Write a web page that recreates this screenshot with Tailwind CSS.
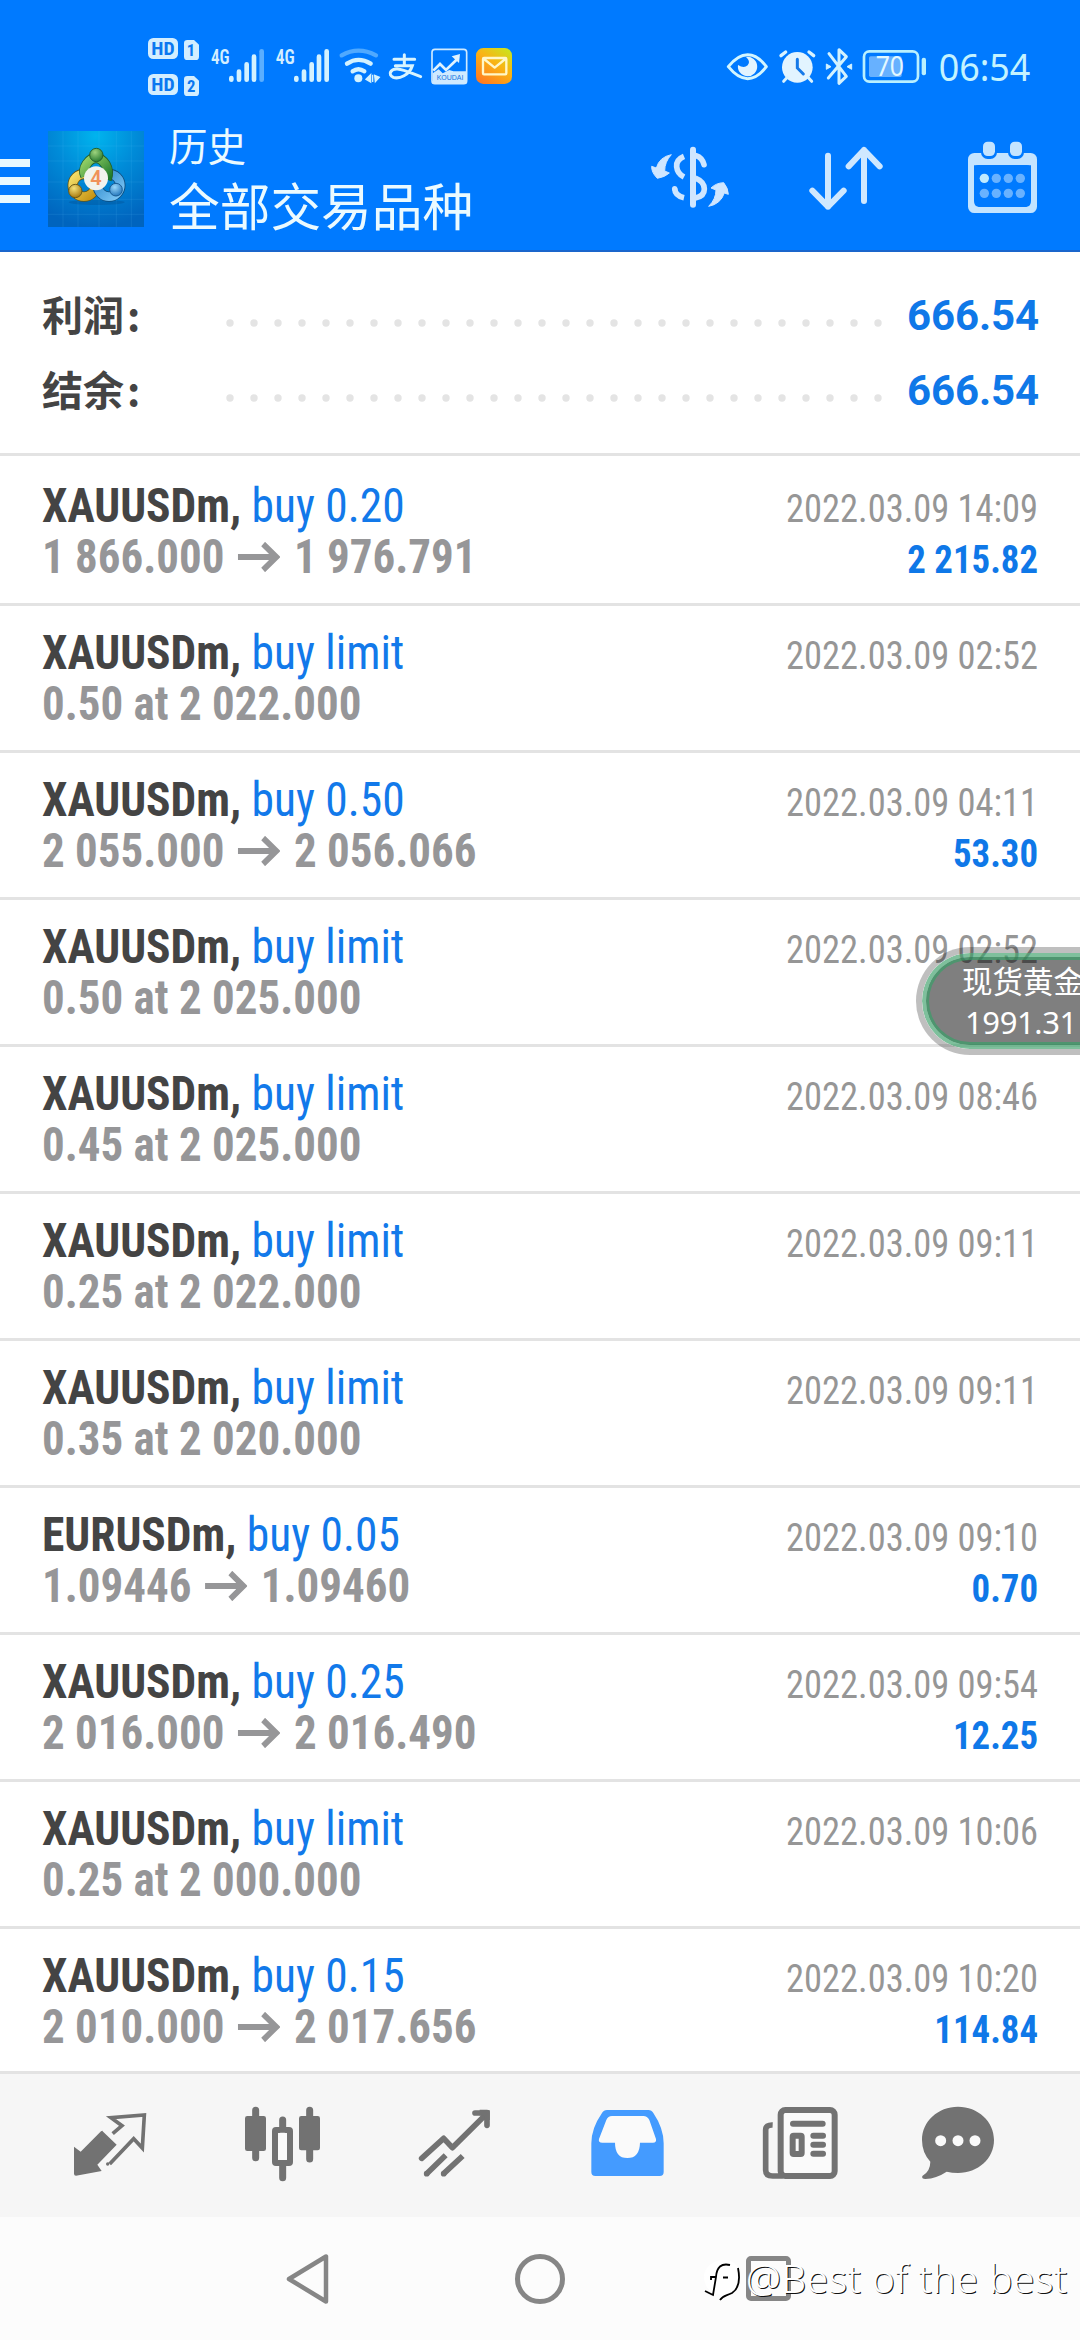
<!DOCTYPE html>
<html lang="zh">
<head>
<meta charset="utf-8">
<title>历史</title>
<script src="https://cdn.jsdelivr.net/npm/@tailwindcss/browser@4"></script>
</head>
<body class="relative flex h-[2340px] w-[1080px] flex-col overflow-hidden bg-white font-['Roboto_Condensed',sans-serif]">

<header class="flex h-[252px] flex-col border-b-2 border-[#1a66cc] bg-[#007aff]">
  <!-- status bar -->
  <div class="flex h-[108px] items-start pl-[130px] pt-5">
    <svg class="h-[90px] w-[400px]" viewBox="0 0 1200 270">
      <g fill="#d3eeff">
        <rect x="54" y="54" width="90" height="63" rx="16"/>
        <rect x="54" y="162" width="90" height="63" rx="16"/>
        <path d="M172 60h20l15 14v36q0 10-10 10h-25q-10 0-10-10v-40q0-10 10-10z"/>
        <path d="M172 168h20l15 14v36q0 10-10 10h-25q-10 0-10-10v-40q0-10 10-10z"/>
      </g>
      <g fill="#0b78f0" font-family="Roboto Condensed" font-weight="700" text-anchor="middle">
        <text x="99" y="105" font-size="56" textLength="70" lengthAdjust="spacingAndGlyphs">HD</text>
        <text x="99" y="213" font-size="56" textLength="70" lengthAdjust="spacingAndGlyphs">HD</text>
        <text x="183" y="108" font-size="50">1</text>
        <text x="184" y="216" font-size="50">2</text>
      </g>
      <g fill="#d3eeff" font-family="Roboto Condensed" font-weight="600" font-size="60">
        <text x="243" y="132" textLength="56" lengthAdjust="spacingAndGlyphs">4G</text>
        <text x="437" y="132" textLength="57" lengthAdjust="spacingAndGlyphs">4G</text>
      </g>
      <g stroke="#d3f2ff" stroke-width="14" stroke-linecap="round">
        <path d="M304 174v5M327 155v24M350 133v46M372 110v69"/>
        <path d="M395 94v85" stroke="#5aaeff"/>
        <path d="M499 174v5M522 155v24M545 133v46M567 110v69M590 94v85"/>
      </g>
      <g fill="none" stroke="#d3f2ff" stroke-width="13" stroke-linecap="round">
        <path d="M635 106Q685 78 738 106" stroke="#4fa9ff"/>
        <path d="M651 131Q685 108 722 131M668 154Q685 141 703 154"/>
      </g>
      <circle cx="685" cy="175" r="12" fill="#d3f2ff"/>
      <path d="M708 178l14-14v22zM728 164v22M734 166l14 6-12 13z" fill="#d3f2ff" stroke="#d3f2ff" stroke-width="4"/>
      <g fill="none" stroke="#d8f4ff" stroke-width="9" stroke-linecap="round">
        <path d="M792 118h62M823 104v32M796 137h51C838 165 808 178 790 172C772 164 782 146 802 147C826 149 850 163 872 170"/>
      </g>
      <rect x="906" y="88" width="104" height="103" rx="9" fill="none" stroke="#cfeaff" stroke-width="5"/>
      <path d="M908 160l18-12 12 12 20-10 12 4h40v36h-102z" fill="#cfeaff"/>
      <path d="M910 152l20-20 18 18 34-33" fill="none" stroke="#dff2ff" stroke-width="8"/>
      <path d="M990 102l-3 27-22-20z" fill="#dff2ff"/>
      <text x="920" y="180" font-family="Liberation Sans" font-size="21" textLength="80" fill="#1675e0">KOUDAI</text>
      <defs><linearGradient id="mail" x1="0.9" y1="0" x2="0.2" y2="1"><stop offset="0" stop-color="#c8e61e"/><stop offset=".45" stop-color="#f9b414"/><stop offset="1" stop-color="#ff7a22"/></linearGradient></defs>
      <rect x="1038" y="84" width="108" height="108" rx="22" fill="url(#mail)"/>
      <path d="M1062 114h64q3 0 3 3v43q0 3-3 3h-64q-3 0-3-3v-43q0-3 3-3zM1062 117l32 26 32-26" fill="none" stroke="#fff7c8" stroke-width="7" stroke-linejoin="round"/>
    </svg>
    <svg class="ml-[170px] h-[90px] w-[380px]" viewBox="0 0 1140 270">
      <path d="M85 140Q113 104 143 104T199 140Q172 176 143 176T85 140z" fill="none" stroke="#d3f6ff" stroke-width="9" stroke-linejoin="round"/>
      <path d="M138 111a29 29 0 1 1-24 24q18 12 29 1t-5-25z" fill="#e2f4ff"/>
      <g stroke="#d9f3ff" stroke-linecap="round">
        <circle cx="292" cy="142" r="46" fill="#e2f4ff" stroke="none"/>
        <path d="M243 107l14-11M341 107l-14-11" stroke-width="10"/>
        <path d="M262 172l-11 12M324 172l11 12" stroke-width="9"/>
        <path d="M292 118v26l18 18" fill="none" stroke="#1579e8" stroke-width="9"/>
      </g>
      <path d="M387 101l52 68-22 21V89l22 21-54 64" fill="none" stroke="#d3f2ff" stroke-width="9" stroke-linejoin="round" stroke-linecap="round"/>
      <path d="M379 132l14 8-14 8zM455 132l-14 8 14 8z" fill="#d3f2ff" stroke="#d3f2ff" stroke-width="3"/>
      <rect x="492" y="94" width="162" height="91" rx="16" fill="none" stroke="#b9f0ff" stroke-width="8"/>
      <rect x="507" y="109" width="98" height="62" rx="5" fill="#67b1ff"/>
      <rect x="665" y="113" width="13" height="53" rx="6" fill="#b9f0ff"/>
      <text x="527" y="169" font-family="Noto Sans" font-size="81" textLength="85" lengthAdjust="spacingAndGlyphs" fill="#e2f8ff">70</text>
      <text x="716" y="184" font-family="Noto Sans" font-size="112" textLength="275" lengthAdjust="spacingAndGlyphs" fill="#c4f3ff">06:54</text>
    </svg>
  </div>

  <!-- app bar -->
  <div class="flex h-[144px] items-center">
    <svg class="mt-1 h-12 w-[30px] shrink-0" viewBox="0 0 30 48"><path d="M0 6h30M0 24h30M0 42h30" stroke="#e9f9ff" stroke-width="8"/></svg>
    <svg class="ml-[18px] size-24 shrink-0" viewBox="0 0 288 288">
      <defs>
        <radialGradient id="bg" cx=".5" cy=".05" r=".95"><stop offset="0" stop-color="#00b4ee"/><stop offset=".45" stop-color="#008bd8"/><stop offset="1" stop-color="#0064be"/></radialGradient>
        <linearGradient id="gr" x1="0" y1="0" x2="1" y2="1"><stop offset="0" stop-color="#9ad56a"/><stop offset="1" stop-color="#1f7a2c"/></linearGradient>
        <linearGradient id="ye" x1="0" y1="0" x2="1" y2="1"><stop offset="0" stop-color="#f4e06a"/><stop offset="1" stop-color="#c69212"/></linearGradient>
        <linearGradient id="bl" x1="0" y1="0" x2="1" y2="1"><stop offset="0" stop-color="#2a86cc"/><stop offset="1" stop-color="#7cc6f4"/></linearGradient>
        <radialGradient id="gb" cx=".4" cy=".3" r=".7"><stop offset="0" stop-color="#9ed47e"/><stop offset="1" stop-color="#2c7d33"/></radialGradient>
        <radialGradient id="yb" cx=".4" cy=".3" r=".7"><stop offset="0" stop-color="#f5e27a"/><stop offset="1" stop-color="#a87a10"/></radialGradient>
        <radialGradient id="bb" cx=".4" cy=".3" r=".7"><stop offset="0" stop-color="#9ad8fb"/><stop offset="1" stop-color="#2678bd"/></radialGradient>
      </defs>
      <rect width="288" height="288" fill="url(#bg)"/>
      <path d="M45 0v288M90 0v288M153 0v288M205 0v288M250 0v288M0 45h288M0 90h288M0 153h288M0 205h288M0 250h288" stroke="#6fd0ff" stroke-opacity=".12" stroke-width="3"/>
      <ellipse cx="146" cy="214" rx="84" ry="8" fill="#003c78" opacity=".25"/>
      <g fill="none" stroke-width="26">
        <circle cx="108" cy="163" r="34" stroke="#5f5418" stroke-width="31"/>
        <circle cx="108" cy="163" r="34" stroke="url(#ye)"/>
        <circle cx="183" cy="163" r="34" stroke="#0e4c7c" stroke-width="31"/>
        <circle cx="183" cy="163" r="34" stroke="url(#bl)"/>
        <path d="M112 135q-8-18 4-36q12-18 28-18t29 20q12 20 3 44" stroke="#235f2c" stroke-width="31"/>
        <path d="M112 135q-8-18 4-36q12-18 28-18t29 20q12 20 3 44" stroke="url(#gr)"/>
      </g>
      <circle cx="145" cy="72" r="20" fill="url(#gb)" stroke="#25602c" stroke-width="3"/>
      <circle cx="82" cy="180" r="20" fill="url(#yb)" stroke="#6d5a15" stroke-width="3"/>
      <circle cx="204" cy="176" r="19" fill="url(#bb)" stroke="#1a5c94" stroke-width="3"/>
      <circle cx="144" cy="142" r="36" fill="#f1f3ee"/>
      <text x="144" y="163" text-anchor="middle" font-family="Roboto" font-weight="600" font-size="60" fill="#f0925a">4</text>
    </svg>
    <div class="ml-[25px] flex flex-col pb-[4px] font-['Noto_Sans_CJK_SC',sans-serif] text-[#ebfaff]">
      <div class="text-[38.5px] leading-[54px]">历史</div>
      <div class="text-[50.7px] leading-[66px]">全部交易品种</div>
    </div>
    <div class="ml-auto flex items-center pr-[42px]">
      <svg class="h-[76px] w-[84px]" viewBox="84 66 252 228" fill="none" stroke="#cfe6ff">
        <path d="M219 92v165" stroke-width="18" stroke-linecap="round"/>
        <path d="M192 112Q168 122 170 143T192 174M164 208Q165 230 192 236" stroke-width="17"/>
        <path d="M228 110Q247 116 252 137" stroke-width="17" stroke-linecap="round"/>
        <path d="M226 177Q253 188 253 210T226 237" stroke-width="17"/>
        <circle cx="164" cy="209" r="8" fill="#cfe6ff" stroke="none"/>
        <g fill="#cfe6ff" stroke="#cfe6ff" stroke-width="3" stroke-linejoin="round"><path d="M154 107Q118 114 109 147L95 142Q94 160 112 178Q136 174 148 162L134 156Q134 128 154 107z"/><path d="M266 262Q302 255 313 222L325 226Q325 208 311 191Q288 192 273 207L288 213Q288 240 266 262z"/></g>
      </svg>
      <svg class="ml-[74px] h-[76px] w-20" viewBox="558 66 240 228" fill="none" stroke="#cfe8ff" stroke-width="18" stroke-linecap="round" stroke-linejoin="round">
        <path d="M624 110v153M577 215l47 48 47-48M732 246V93M686 142l46-49 47 49"/>
      </svg>
      <svg class="ml-20 h-[76px] w-[72px]" viewBox="1038 66 216 228">
        <rect x="1053" y="111" width="189" height="162" rx="10" fill="none" stroke="#c4e4ff" stroke-width="18"/>
        <path d="M1062 108h171v31h-171z" fill="#c4e4ff"/>
        <path d="M1062 154v-4q0-12 14-12h144q13 0 13 12v4z" fill="#007aff"/>
        <path d="M1062 246v18h14q-14-2-14-18zM1233 246v18h-14q14-2 14-18z" fill="#c4e4ff"/>
        <rect x="1083" y="62" width="48" height="58" rx="20" fill="#007aff"/><rect x="1164" y="62" width="48" height="58" rx="20" fill="#007aff"/>
        <rect x="1089" y="68" width="36" height="43" rx="14" fill="#c4e4ff"/><rect x="1170" y="68" width="36" height="43" rx="14" fill="#c4e4ff"/>
        <circle cx="1093" cy="178" r="14" fill="#bfeaff"/>
        <g fill="#69b2ff"><circle cx="1129" cy="178" r="14"/><circle cx="1165" cy="178" r="14"/><circle cx="1201" cy="178" r="14"/><circle cx="1093" cy="223" r="14"/><circle cx="1129" cy="223" r="14"/><circle cx="1165" cy="223" r="14"/><circle cx="1201" cy="223" r="14"/></g>
      </svg>
    </div>
  </div>
</header>

<!-- totals -->
<section class="flex h-[204px] flex-col border-b-[3px] border-[#e3e3e3] pl-[42px] pr-[41px] pt-[26px]">
  <div class="flex h-[75px] items-center">
    <span class="-mt-1 w-[184px] font-['Noto_Sans_CJK_SC',sans-serif] text-[41px] font-bold leading-none text-[#444]">利润<span class="ml-[3px]">:</span></span>
    <svg class="mt-[15px] h-2 w-[656px]" viewBox="0 0 656 8"><path d="M4 4h649" stroke="#e4e4e4" stroke-width="7.4" stroke-linecap="round" stroke-dasharray="0 24"/></svg>
    <span class="ml-auto font-[Roboto] text-[42px] font-bold tracking-[-0.1px] text-[#0f78e8]">666.54</span>
  </div>
  <div class="flex h-[75px] items-center">
    <span class="-mt-1 w-[184px] font-['Noto_Sans_CJK_SC',sans-serif] text-[41px] font-bold leading-none text-[#444]">结余<span class="ml-[3px]">:</span></span>
    <svg class="mt-[15px] h-2 w-[656px]" viewBox="0 0 656 8"><path d="M4 4h649" stroke="#e4e4e4" stroke-width="7.4" stroke-linecap="round" stroke-dasharray="0 24"/></svg>
    <span class="ml-auto font-[Roboto] text-[42px] font-bold tracking-[-0.1px] text-[#0f78e8]">666.54</span>
  </div>
</section>

<main id="deals" class="h-[1615px] overflow-hidden pt-[3px]"></main>

<!-- tab bar -->
<nav class="flex h-[146px] items-center border-t-[3px] border-[#e3e3e3] bg-[#f6f6f6] pb-[2px] pl-6">
  <div class="flex w-[172px] justify-center"><svg class="h-[90px] w-[84px]" viewBox="84 120 252 270">
    <path d="M187 213L230 254L172 314L185 333L108 347Q102 347 102 341V260L122 275L183 214Q187 211 190 214z" fill="#727272"/>
    <path d="M218 221L246 197L213 173L313 165L307 264L281 236L209 312" fill="none" stroke="#727272" stroke-width="11"/><circle cx="203" cy="312" r="5" fill="#727272"/></svg></div>
  <div class="flex w-[173px] justify-center"><svg class="h-[90px] w-[84px]" viewBox="600 120 252 270" fill="#727272">
    <path d="M644 151v142M806 151v146M725 180v30M725 315v38" stroke="#727272" stroke-width="21" stroke-linecap="round"/>
    <rect x="612" y="168" width="63" height="105" rx="7"/><rect x="774" y="168" width="63" height="103" rx="7"/>
    <rect x="702" y="210" width="45" height="99" rx="3" fill="#f6f6f6" stroke="#727272" stroke-width="18"/><rect x="711" y="218" width="27" height="82" rx="8" fill="#fafafa"/></svg></div>
  <div class="flex w-[172px] justify-center"><svg class="h-[90px] w-[84px]" viewBox="1116 120 252 270" fill="none" stroke="#727272" stroke-width="17">
    <path d="M1142 295L1208 235L1234 263L1333 165" stroke-linejoin="round" stroke-linecap="round"/><path d="M1302 159H1338V196" stroke-linecap="round"/>
    <path d="M1214 286L1157 341M1265 288L1208 341"/><path d="M1157 341h.1M1208 341h.1" stroke-linecap="round"/><path d="M1316 158H1338V180" stroke-linejoin="round"/></svg></div>
  <div class="flex w-[173px] justify-center"><svg class="h-[90px] w-[84px]" viewBox="75 120 252 270">
    <path d="M138 150H262Q272 150 277 159Q308 205 308 250V336Q308 348 296 348H103Q91 348 91 336V250Q91 205 123 159Q128 150 138 150z" fill="#449bff"/>
    <path d="M153 168H247Q259 168 265 180L285 237Q287 248 276 248H237Q236 294 199 294T162 248H124Q111 248 114 237L136 180Q141 168 153 168z" fill="#fafafa"/></svg></div>
  <div class="flex w-[172px] justify-center"><svg class="h-[90px] w-[84px]" viewBox="594 120 252 270" fill="none" stroke="#727272" stroke-width="18">
    <rect x="662" y="150" width="162" height="198" rx="14" fill="#fafafa"/>
    <path d="M638 195Q617 194 617 210V330Q617 348 638 348H668" stroke-width="17"/>
    <path d="M699 191H788M760 227H789M760 254H789M760 281H789" stroke-linecap="round"/>
    <rect x="698" y="227" width="27" height="55" rx="3"/></svg></div>
  <div class="flex w-[143px] justify-center"><svg class="h-[90px] w-[84px]" viewBox="1068 120 252 270">
    <path d="M1194 140C1254 140 1302 184 1302 240S1254 339 1194 339Q1176 339 1160 335Q1130 355 1096 357Q1084 357 1087 348Q1111 334 1111 305Q1086 278 1086 240C1086 184 1134 140 1194 140z" fill="#727272"/>
    <g fill="#fafafa"><circle cx="1142" cy="242" r="16.500"/><circle cx="1194" cy="242" r="16.500"/><circle cx="1245" cy="242" r="16.500"/></g></svg></div>
</nav>

<!-- system navigation -->
<footer class="relative flex h-[123px] items-center bg-[#fcfcfc] pl-[285px]">
  <svg class="h-[52px] w-[46px]" viewBox="0 0 46 52"><path d="M4 26L41 3.500V48.500z" fill="none" stroke="#868686" stroke-width="4.500" stroke-linejoin="round"/></svg>
  <div class="ml-[184px] size-[50px] rounded-full border-[5px] border-[#868686]"></div>
  <div class="ml-[181px] size-[45px] rounded-[5px] border-[5px] border-[#868686]"></div>
  <div class="absolute left-[702px] top-[33px] flex items-center">
    <svg class="h-[56px] w-[42px]" viewBox="0 0 42 56"><path d="M22 10C34 10 38 18 38 27S34 42 26 44L18 50L18 44C8 44 2 36 2 27S10 10 22 10z" fill="#fff"/>
      <path d="M28 15Q15 12 14 27L11 45Q7 43 3 41M9 30L9 27H14M21 27.500H26M36 18C38 28 38 38 30 43C24 46 21 45 18 50" fill="none" stroke="#000" stroke-width="1.800"/></svg>
    <span class="ml-[2px] whitespace-nowrap font-['Noto_Sans',sans-serif] text-[39.3px] font-light leading-[56px] tracking-[0.4px] text-white [text-shadow:1px_1px_0.5px_#111]">@Best of the best</span>
  </div>
</footer>

<!-- floating quote widget, partly off screen -->
<div class="absolute left-[916px] top-[947px] h-[108px] w-[164px] overflow-hidden rounded-l-[54px] border-y-[6px] border-l-[6px] border-black/25">
  <div class="h-full w-full rounded-l-[48px] border-y-[4px] border-l-[4px] border-[#3a9f68]/65 bg-black/50 bg-clip-padding">
    <div class="h-full w-full rounded-l-[44px] border-y-[3px] border-l-[3px] border-[#3a9f68]/70 pl-[33px] font-['Noto_Sans_CJK_SC',sans-serif] text-[30.5px] leading-[40px] whitespace-nowrap text-white"><div>现货黄金</div><div class="mt-[2px] pl-[3px] font-['Noto_Sans',sans-serif] text-[31px] tracking-[-0.4px]">1991.31</div></div>
  </div>
</div>

<script>
const deals = [
  ['XAUUSDm','buy 0.20','1 866.000','1 976.791','2022.03.09 14:09','2 215.82'],
  ['XAUUSDm','buy limit','0.50 at 2 022.000','','2022.03.09 02:52',''],
  ['XAUUSDm','buy 0.50','2 055.000','2 056.066','2022.03.09 04:11','53.30'],
  ['XAUUSDm','buy limit','0.50 at 2 025.000','','2022.03.09 02:52',''],
  ['XAUUSDm','buy limit','0.45 at 2 025.000','','2022.03.09 08:46',''],
  ['XAUUSDm','buy limit','0.25 at 2 022.000','','2022.03.09 09:11',''],
  ['XAUUSDm','buy limit','0.35 at 2 020.000','','2022.03.09 09:11',''],
  ['EURUSDm','buy 0.05','1.09446','1.09460','2022.03.09 09:10','0.70'],
  ['XAUUSDm','buy 0.25','2 016.000','2 016.490','2022.03.09 09:54','12.25'],
  ['XAUUSDm','buy limit','0.25 at 2 000.000','','2022.03.09 10:06',''],
  ['XAUUSDm','buy 0.15','2 010.000','2 017.656','2022.03.09 10:20','114.84']
];
const arrow = '<svg class="ml-[14px] mr-[15px] mt-[1px] h-[30px] w-[45px]" viewBox="0 0 45 30"><path d="M0 15H41M27 2L41 15L27 28" fill="none" stroke="#969698" stroke-width="6"/></svg>';
document.getElementById('deals').innerHTML = deals.map(([s,a,p,q,d,r]) => `
  <div class="flex h-[147px] justify-between border-b-[3px] border-[#e3e3e3] px-[42px] pt-[21px]">
    <div class="text-[48px] leading-[51px] whitespace-nowrap">
      <div class="h-[51px] origin-left scale-x-[.947]"><span class="font-bold text-[#444]">${s},</span><span class="text-[#1279ea]"> ${a}</span></div>
      <div class="flex h-[51px] origin-left scale-x-[.937] items-center font-bold text-[#969698]">${p}${q ? arrow + q : ''}</div>
    </div>
    <div class="pt-[3px] text-right text-[39.5px] leading-[51px] whitespace-nowrap">
      <div class="h-[51px] origin-right scale-x-[.923] text-[#969696]">${d}</div>
      <div class="origin-right scale-x-[.933] font-bold text-[#0f78e8]">${r}</div>
    </div>
  </div>`).join('');
</script>
</body>
</html>
